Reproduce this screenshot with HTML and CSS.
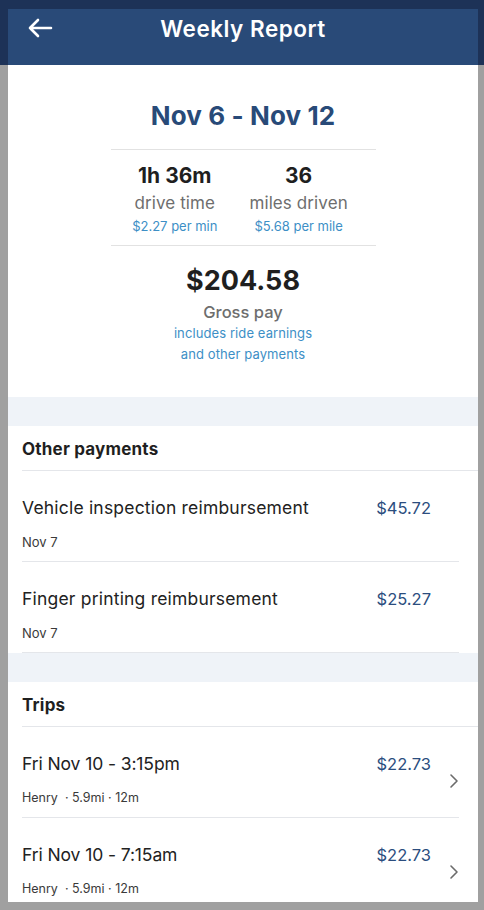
FILE: index.html
```html
<!DOCTYPE html>
<html>
<head>
<meta charset="utf-8">
<link rel="stylesheet" href="styles.css">
</head>
<body>
<div class="frame">
  <div class="card">
    <header class="topbar">
      <svg class="back" width="26" height="24" viewBox="0 0 26 24"><path d="M24 12H3M11 4L3 12l8 8" fill="none" stroke="#fff" stroke-width="2.6" stroke-linecap="round" stroke-linejoin="round"/></svg>
      <h1 class="title">Weekly Report</h1>
    </header>

    <section class="summary">
      <div class="range">Nov 6 - Nov 12</div>
      <div class="stats">
        <div class="stat">
          <div class="stat-val">1h 36m</div>
          <div class="stat-label">drive time</div>
          <div class="stat-rate">$2.27 per min</div>
        </div>
        <div class="stat">
          <div class="stat-val">36</div>
          <div class="stat-label">miles driven</div>
          <div class="stat-rate">$5.68 per mile</div>
        </div>
      </div>
      <div class="gross">$204.58</div>
      <div class="gross-label">Gross pay</div>
      <div class="note">includes ride earnings</div>
      <div class="note">and other payments</div>
    </section>

    <div class="band"></div>

    <div class="sec-head"><span>Other payments</span></div>
    <div class="row">
      <div class="row-main">
        <div class="row-title">Vehicle inspection reimbursement</div>
        <div class="row-amt">$45.72</div>
      </div>
      <div class="row-sub">Nov 7</div>
    </div>
    <div class="row">
      <div class="row-main">
        <div class="row-title">Finger printing reimbursement</div>
        <div class="row-amt">$25.27</div>
      </div>
      <div class="row-sub">Nov 7</div>
    </div>

    <div class="band"></div>

    <div class="sec-head"><span>Trips</span></div>
    <div class="row trip">
      <div class="row-main">
        <div class="row-title">Fri Nov 10 - 3:15pm</div>
        <div class="row-amt">$22.73</div>
      </div>
      <div class="row-sub">Henry &nbsp;· 5.9mi · 12m</div>
      <svg class="chev" width="10" height="16" viewBox="0 0 10 16"><path d="M2 2l6 6-6 6" fill="none" stroke="#6b6b6b" stroke-width="1.6" stroke-linecap="round" stroke-linejoin="round"/></svg>
    </div>
    <div class="row trip">
      <div class="row-main">
        <div class="row-title">Fri Nov 10 - 7:15am</div>
        <div class="row-amt">$22.73</div>
      </div>
      <div class="row-sub">Henry &nbsp;· 5.9mi · 12m</div>
      <svg class="chev" width="10" height="16" viewBox="0 0 10 16"><path d="M2 2l6 6-6 6" fill="none" stroke="#6b6b6b" stroke-width="1.6" stroke-linecap="round" stroke-linejoin="round"/></svg>
    </div>
  </div>
</div>
</body>
</html>
```

FILE: styles.css
```css
html, body {
  margin: 0;
  padding: 0;
}
body {
  background: #a0a0a0;
  font-family: Inter, "Noto Sans", sans-serif;
  color: #1f1f1f;
  width: 484px;
  height: 910px;
  overflow: hidden;
}
.frame {
  height: 910px;
  box-sizing: border-box;
  padding: 9px 6px 0 8px;
  background: linear-gradient(#1d3257 0, #1d3257 65px, #a0a0a0 65px);
}
.card {
  width: 470px;
  height: 893px;
  background: #fff;
  overflow: hidden;
}
.topbar {
  height: 56px;
  background: #294a78;
  display: flex;
  align-items: flex-start;
  justify-content: center;
  position: relative;
}
.back {
  position: absolute;
  left: 19px;
  top: 7px;
}
.title {
  margin: 0;
  padding-top: 6px;
  font-size: 22.5px;
  line-height: 28px;
  font-weight: 600;
  color: #fff;
  letter-spacing: 0.5px;
}
.summary {
  display: flex;
  flex-direction: column;
  align-items: center;
  padding-top: 36px;
  padding-bottom: 32px;
}
.range {
  font-size: 26px;
  line-height: 30px;
  font-weight: 700;
  color: #284a78;
  letter-spacing: 0.1px;
}
.stats {
  margin-top: 18px;
  width: 265px;
  margin-left: 0;
  border-top: 1px solid #e2e2e2;
  border-bottom: 1px solid #e2e2e2;
  padding: 14px 0 10px;
  display: flex;
  justify-content: center;
  gap: 32px;
}
.stat {
  display: flex;
  flex-direction: column;
  align-items: center;
}
.stat:first-child {
  margin-left: -6px;
}
.stat-val {
  font-size: 21px;
  line-height: 24px;
  font-weight: 700;
  color: #1f1f1f;
}
.stat-label {
  margin-top: 4px;
  font-size: 17px;
  line-height: 22px;
  color: #6e6e6e;
  letter-spacing: 0.1px;
}
.stat-rate {
  margin-top: 3px;
  font-size: 13px;
  line-height: 18px;
  color: #3d8fc6;
}
.gross {
  margin-top: 18px;
  font-size: 27px;
  line-height: 34px;
  font-weight: 700;
  color: #1f1f1f;
}
.gross-label {
  margin-top: 3px;
  font-size: 16.5px;
  line-height: 22px;
  font-weight: 500;
  color: #6e6e6e;
}
.note {
  font-size: 13px;
  line-height: 21px;
  color: #3d8fc6;
  letter-spacing: 0.1px;
}
.band {
  height: 29px;
  background: #eff3f8;
}
.sec-head {
  height: 45px;
  padding-left: 14px;
  box-sizing: border-box;
}
.sec-head span {
  display: block;
  height: 44px;
  border-bottom: 1px solid #e4e6ea;
  font-size: 17px;
  line-height: 46px;
  font-weight: 700;
  color: #1f1f1f;
  letter-spacing: 0.2px;
}
.row {
  margin-left: 14px;
  margin-right: 19px;
  height: 91px;
  box-sizing: border-box;
  border-bottom: 1px solid #e4e6ea;
  position: relative;
  padding-top: 25px;
}
.row-main {
  display: flex;
  justify-content: space-between;
  padding-right: 28px;
}
.row-title {
  font-size: 17.5px;
  line-height: 24px;
  color: #222;
  letter-spacing: 0.2px;
}
.trip .row-title {
  letter-spacing: -0.1px;
}
.row-amt {
  font-size: 16.5px;
  line-height: 24px;
  color: #2b4d7e;
}
.row-sub {
  margin-top: 13px;
  font-size: 13px;
  line-height: 18px;
  color: #3a3a3a;
}
.trip .row-sub {
  font-size: 12.5px;
}
.chev {
  position: absolute;
  right: 0;
  top: 46px;
}
```
